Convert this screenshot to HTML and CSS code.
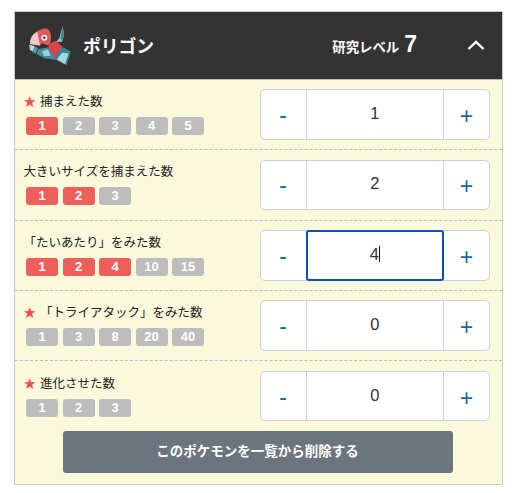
FILE: index.html
```html
<!DOCTYPE html>
<html lang="ja">
<head>
    <meta charset="UTF-8">
    <meta name="viewport" content="width=device-width, initial-scale=1.0">
    <title>ポリゴン</title>
    <link rel="stylesheet" href="styles.css">
</head>
<body>
    <div class="panel">
        <div class="panel-head">
            <!-- Pokemon sprite -->
            <svg class="sprite" viewBox="0 0 180 180">
                <polygon points="128,30 132,58 126,78 108,78 118,66" fill="#8fb8c2"/>
                <polygon points="128,30 132,58 126,78 122,64" fill="#3f8a96"/>
                <polygon points="86,84 108,74 128,92 116,116 105,132 84,116" fill="#d8454d"/>
                <polygon points="54,100 84,94 108,132 72,126 50,114" fill="#3d929e"/>
                <polygon points="66,106 84,100 92,120 72,120" fill="#9dcdd8"/>
                <polygon points="28,86 54,96 46,114 30,102" fill="#4f9dab"/>
                <polygon points="28,86 44,90 38,104 30,102" fill="#b5dce4"/>
                <polygon points="110,112 130,94 152,106 140,148 108,132" fill="#2f8795"/>
                <polygon points="126,110 146,112 135,145 110,130" fill="#a9d4de"/>
                <path d="M30 84 C30 62 44 44 70 38 C84 36 92 44 93 60 C94 74 90 84 84 88 L66 82 L58 90 Z" fill="#df5a60"/>
                <path d="M30 84 C30 66 38 54 52 48 L60 88 Z" fill="#f3c9c9"/>
                <circle cx="73" cy="65" r="9" fill="#eee"/>
                <circle cx="73" cy="65" r="3.5" fill="#222"/>
            </svg>
            <div class="poke-name">ポリゴン</div>
            <div class="level">研究レベル<span class="level-num">7</span></div>
            <svg class="chevron" viewBox="0 0 18 10">
                <path d="M1.5 9 L9 1.8 L16.5 9" fill="none" stroke="#fff" stroke-width="2.4"/>
            </svg>
        </div>

        <div class="row">
            <div class="task">
                <div class="label"><span class="star">★</span>捕まえた数</div>
                <div class="pills">
                    <span class="pill on">1</span>
                    <span class="pill">2</span>
                    <span class="pill">3</span>
                    <span class="pill">4</span>
                    <span class="pill">5</span>
                </div>
            </div>
            <div class="stepper">
                <div class="step minus">-</div>
                <div class="count">1</div>
                <div class="step plus">+</div>
            </div>
        </div>

        <div class="row">
            <div class="task">
                <div class="label">大きいサイズを捕まえた数</div>
                <div class="pills">
                    <span class="pill on">1</span>
                    <span class="pill on">2</span>
                    <span class="pill">3</span>
                </div>
            </div>
            <div class="stepper">
                <div class="step minus">-</div>
                <div class="count">2</div>
                <div class="step plus">+</div>
            </div>
        </div>

        <div class="row">
            <div class="task">
                <div class="label">「たいあたり」をみた数</div>
                <div class="pills">
                    <span class="pill on">1</span>
                    <span class="pill on">2</span>
                    <span class="pill on">4</span>
                    <span class="pill">10</span>
                    <span class="pill">15</span>
                </div>
            </div>
            <div class="stepper">
                <div class="step minus">-</div>
                <div class="count focused">4<span class="caret"></span></div>
                <div class="step plus">+</div>
            </div>
        </div>

        <div class="row">
            <div class="task">
                <div class="label"><span class="star">★</span>「トライアタック」をみた数</div>
                <div class="pills">
                    <span class="pill">1</span>
                    <span class="pill">3</span>
                    <span class="pill">8</span>
                    <span class="pill">20</span>
                    <span class="pill">40</span>
                </div>
            </div>
            <div class="stepper">
                <div class="step minus">-</div>
                <div class="count">0</div>
                <div class="step plus">+</div>
            </div>
        </div>

        <div class="row last">
            <div class="task">
                <div class="label"><span class="star">★</span>進化させた数</div>
                <div class="pills">
                    <span class="pill">1</span>
                    <span class="pill">2</span>
                    <span class="pill">3</span>
                </div>
            </div>
            <div class="stepper">
                <div class="step minus">-</div>
                <div class="count">0</div>
                <div class="step plus">+</div>
            </div>
        </div>

        <div class="remove-wrap">
            <div class="remove">このポケモンを一覧から削除する</div>
        </div>
    </div>
</body>
</html>
```

FILE: styles.css
```css
body {
    margin: 0;
    padding: 11px 9px 0 14px;
    background: #fff;
    font-family: "Liberation Sans", "Noto Sans CJK JP", sans-serif;
    color: #222;
}
.panel {
    border: 1px solid #c8c8c8;
    background: #fbf9dc;
}
.panel-head {
    display: flex;
    align-items: center;
    height: 67px;
    padding-left: 5px;
    background: #333;
    color: #fff;
    border-bottom: 1px solid #bbb;
}
.sprite {
    width: 60px;
    height: 60px;
}
.poke-name {
    margin-left: 3px;
    margin-top: -2px;
    font-size: 17.8px;
    font-weight: bold;
}
.level {
    margin-left: auto;
    display: flex;
    align-items: baseline;
    margin-top: -3px;
    font-size: 13.4px;
    font-weight: bold;
}
.level-num {
    margin-left: 5px;
    font-size: 23px;
}
.chevron {
    width: 18px;
    height: 10px;
    margin: -2px 17px 0 50px;
}
.row {
    box-sizing: border-box;
    height: 70.33px;
    display: flex;
    align-items: center;
    justify-content: space-between;
    padding: 0 12px 0 9px;
    border-bottom: 1px dashed #bdbdbd;
}
.row.last {
    height: 69.5px;
    border-bottom: none;
}
.label {
    margin-left: -0.5px;
    font-size: 12.5px;
    line-height: 16px;
    margin-bottom: 7px;
}
.star {
    color: #ee4f4f;
    margin-right: 4px;
}
.pills {
    display: flex;
    gap: 4.5px;
    padding-left: 2px;
}
.pill {
    width: 32px;
    height: 18px;
    line-height: 18px;
    border-radius: 3px;
    text-align: center;
    background: #bdbdbd;
    color: #fff;
    font-size: 13px;
    font-weight: bold;
}
.pill.on {
    background: #ee5f5b;
}
.stepper {
    display: flex;
    width: 230.5px;
    height: 50.5px;
    box-sizing: border-box;
    border: 1px solid #cbd2dc;
    border-radius: 5px;
    background: #fff;
}
.step {
    width: 45px;
    display: flex;
    align-items: center;
    justify-content: center;
    color: #1a65a8;
    font-size: 23px;
}
.minus {
    border-right: 1px solid #cbd2dc;
    padding-top: 2px;
}
.plus {
    border-left: 1px solid #cbd2dc;
    font-size: 23px;
    padding-top: 4px;
}
.count {
    flex: 1;
    display: flex;
    align-items: center;
    justify-content: center;
    padding-bottom: 2px;
    font-size: 16.5px;
    color: #333;
}
.count.focused {
    margin: -1px;
    border: 2px solid #0b4fc4;
    border-radius: 3px;
    z-index: 1;
}
.caret {
    width: 1px;
    height: 16px;
    background: #111;
}
.remove-wrap {
    display: flex;
    justify-content: center;
    padding: 0 2px 11px 0;
}
.remove {
    width: 390px;
    height: 42px;
    line-height: 42px;
    border-radius: 3px;
    background: #6c757d;
    color: #fff;
    text-align: center;
    font-size: 13.5px;
    font-weight: bold;
}
```
